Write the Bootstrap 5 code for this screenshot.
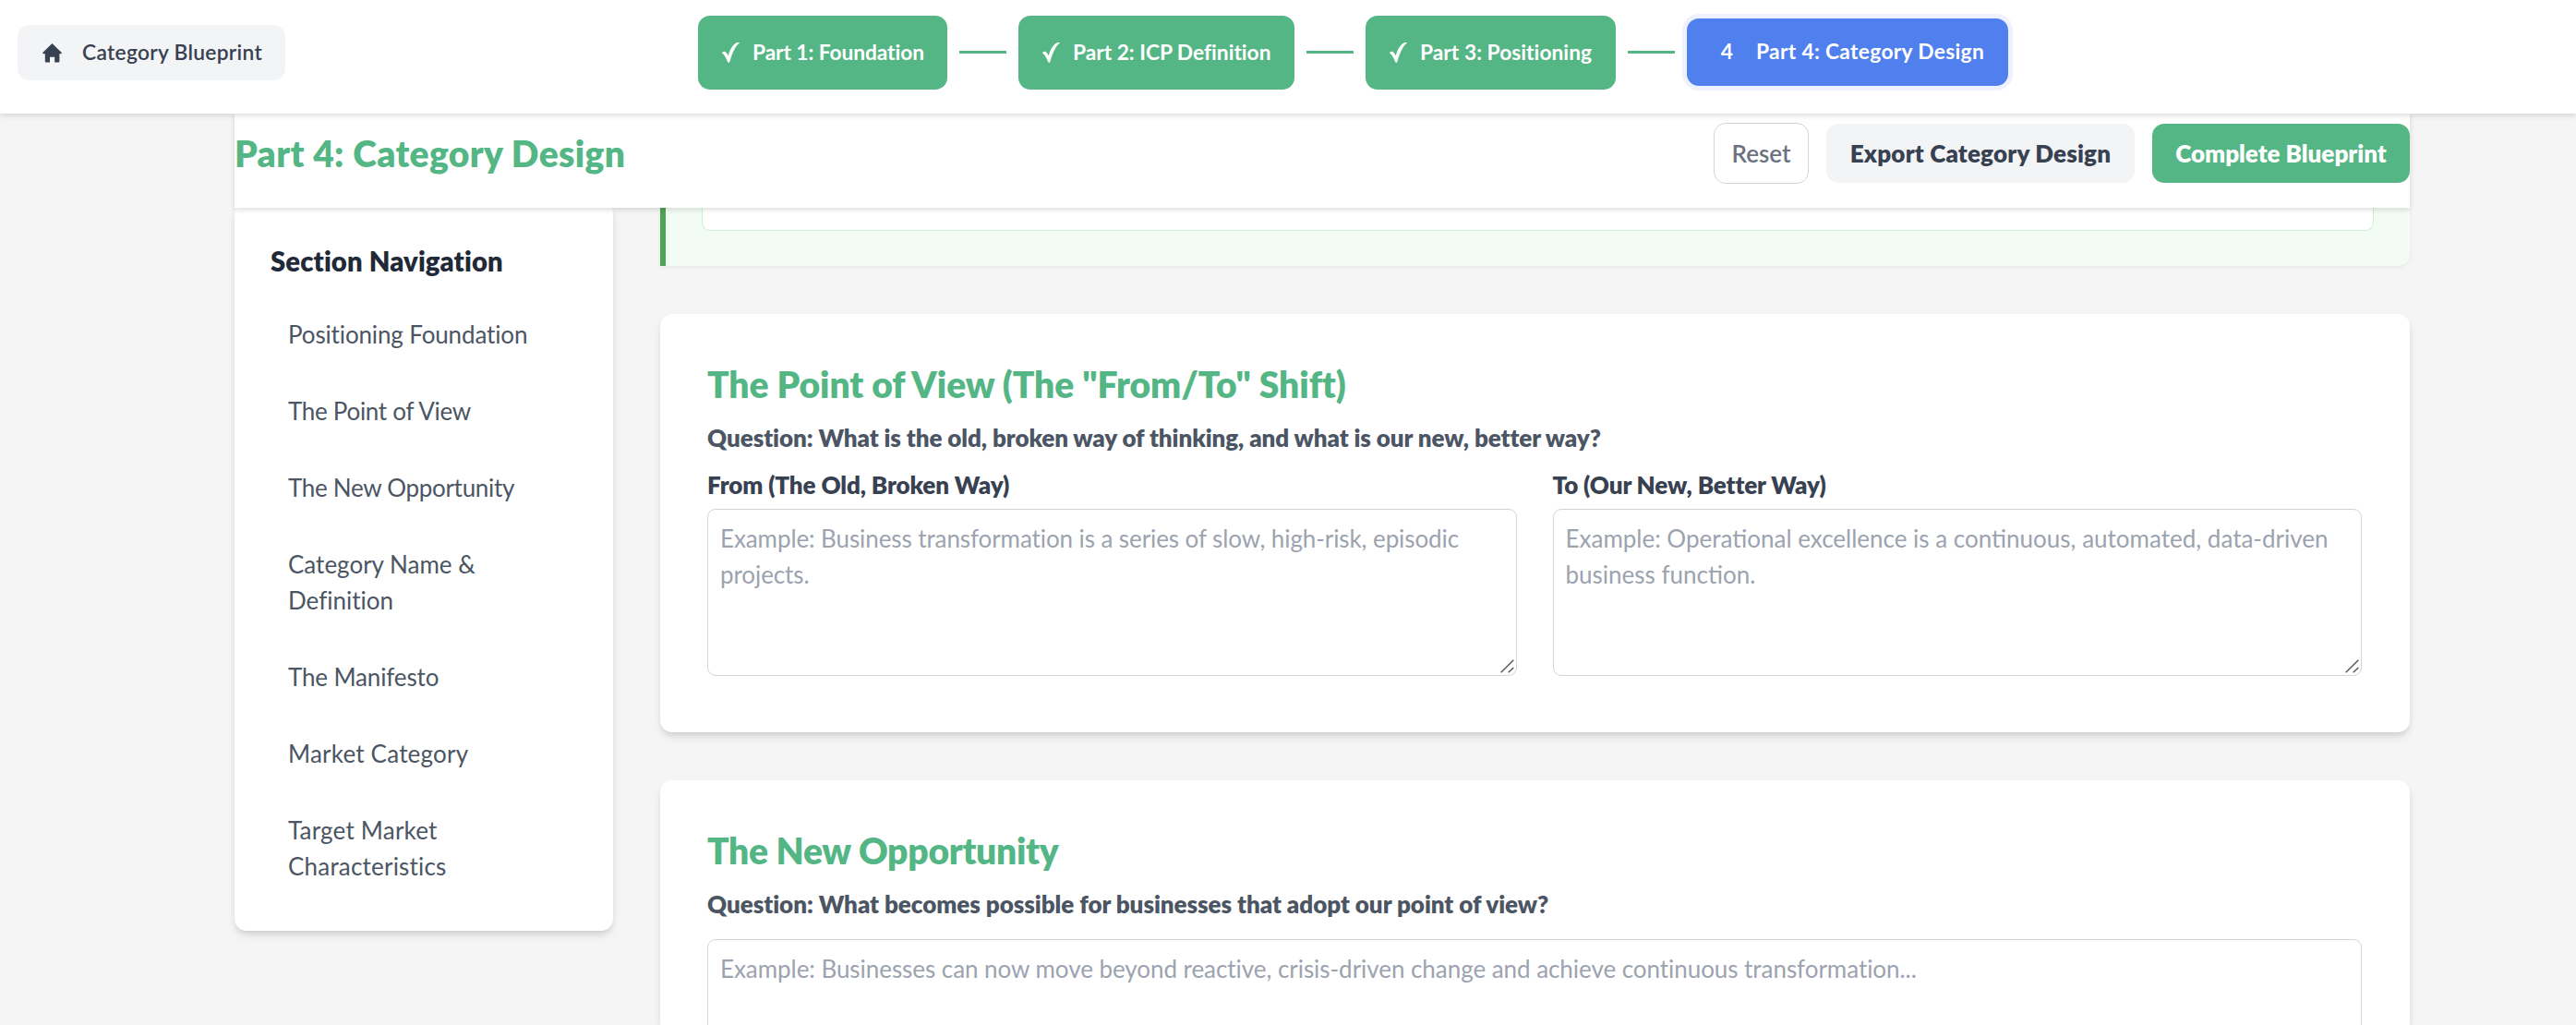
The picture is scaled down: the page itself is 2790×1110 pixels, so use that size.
<!DOCTYPE html>
<html lang="en">
<head>
<meta charset="utf-8">
<meta name="viewport" content="width=device-width, initial-scale=1">
<title>Category Blueprint</title>
<link href="https://cdn.jsdelivr.net/npm/bootstrap@5.3.0/dist/css/bootstrap.min.css" rel="stylesheet">
<style>
  html { font-size: 26px; overflow: hidden; }
  body { font-family: Lato, "Open Sans", sans-serif; font-variant-ligatures: none; background: #f5f5f5; color: #374151; height: 1110px; overflow: hidden; }

  /* Top bar with the progress steps */
  .topbar { height: 123px; padding: 17px 19px 26px; box-shadow: 0 2px 6px rgba(0,0,0,.14); z-index: 30; }
  .home-btn { width: 290px; height: 60px; padding: 0 0 0 26px; gap: 22px; background: #f3f4f6; color: #374151; border-radius: 13px; font-size: 22.75px; font-weight: 600; letter-spacing: .3px; }
  .steps { margin-left: 447px; }
  .step { height: 80px; padding: 0 0 0 26px; gap: 14px; border-radius: 13px; background: #55b685; color: #fff; font-size: 22.75px; font-weight: 700; white-space: nowrap; }
  .step svg { flex: none; }
  .step-1 { width: 270px; letter-spacing: -.08px; }
  .step-2 { width: 299px; letter-spacing: -.02px; }
  .step-3 { width: 271px; letter-spacing: .03px; }
  .step-4 { width: 348px; height: 73px; margin-top: -1px; background: #4f80ee; box-shadow: 0 0 0 5px #edf2fe; letter-spacing: .33px; }
  .step-num { width: 35px; text-align: center; }
  .step-line { width: 51px; height: 3px; margin: -1px 13px 0; background: #55b685; }

  /* Page frame */
  .page { width: 2356px; margin-left: 254px; }
  .titlebar { height: 102px; padding: 10px 0 26px; box-shadow: 0 2px 6px rgba(0,0,0,.14); z-index: 20; }
  .titlebar h1 { font-size: 39px; font-weight: 800; color: #55b685; letter-spacing: .37px; }
  .tool { height: 64px; padding: 0; border: 0; border-radius: 13px; font-weight: 800; }
  .tool-reset { width: 103px; height: 66px; border: 1px solid #d1d5db; background: #fff; color: #6b7280; font-weight: 600; }
  .tool-export { width: 334px; margin: 0 19px; background: #f3f4f6; color: #374151; letter-spacing: .2px; }
  .tool-done { width: 279px; background: #55b685; color: #fff; letter-spacing: 0; }

  .panel { background: #fff; border-radius: 13px; box-shadow: 0 6px 10px -1px rgba(0,0,0,.1), 0 3px 6px -2px rgba(0,0,0,.1); }

  /* Section navigation */
  .side { width: 410px; height: 789px; margin-top: -6px; padding: 46px 39px 39px; flex: none; }
  .side h2 { font-size: 29.25px; font-weight: 800; color: #1f2937; letter-spacing: .12px; margin-bottom: 30px; }
  .side-list { gap: 18px; }
  .side-list a { padding: 13px 60px 13px 19px; color: #4b5563; text-decoration: none; }
  .ls-tight { letter-spacing: -.3px; }
  .ls-snug { letter-spacing: -.14px; }
  .ls-wide { letter-spacing: .2px; }

  /* Content column */
  .content { margin-left: 51px; gap: 52px; }
  .foundation { height: 63px; padding: 0 39px 38px; background: #f2fcf5; border-left: 6px solid #4fa357; border-radius: 0 0 13px 0; box-shadow: 0 2px 5px rgba(0,0,0,.05); }
  .foundation-box { background: #fff; border: 1px solid #c9f2d5; border-top: 0; border-radius: 0 0 9px 9px; }
  .block { padding: 53px 52px 0 51px; }
  .block-pov { height: 453px; }
  .block-opp { height: 265px; border-radius: 13px 13px 0 0; }
  .block h2 { font-size: 39px; font-weight: 800; color: #55b685; line-height: 47px; margin-bottom: 15px; }
  .block-pov h2 { letter-spacing: -.05px; }
  .block-opp h2 { letter-spacing: -.28px; }
  .ask { font-weight: 800; color: #4b5563; margin-bottom: 12px; letter-spacing: -.08px; }
  .block-opp .ask { margin-bottom: 18px; letter-spacing: -.05px; }
  .pair { gap: 39px; }
  .pair label { font-weight: 800; color: #374151; margin-bottom: 6px; letter-spacing: -.1px; }
  .entry { height: 181px; padding: 12px 13px; border: 1px solid #d1d5db; border-radius: 9px; resize: none; font-size: 26px; overflow: hidden; background: #fff; }
  .entry.ls-snug { letter-spacing: -.09px; }
  .block-opp .entry { height: 93px; border-bottom: 0; border-radius: 9px 9px 0 0; letter-spacing: -.05px; }
  .entry::placeholder { color: #9ca3af; opacity: 1; }
  .grip { right: 3px; bottom: 3px; }
</style>
<script src="https://cdn.jsdelivr.net/npm/bootstrap@5.3.0/dist/js/bootstrap.bundle.min.js"></script>
</head>
<body>
<svg class="d-none">
  <symbol id="tick" viewBox="0 0 19 22"><path d="M0 11.2 C1.6 9.4 3.8 9.8 4.8 11.6 L6.8 14.8 C8.6 8.4 11.4 3 15.2 .8 C16.4 .2 17.8 0 19 .1 C14.4 3.6 10.8 11 8.3 20.4 L7.3 22 L6 20.2 C4.6 16.6 3.2 13.4 0 11.2Z" fill="currentColor" stroke="currentColor" stroke-width=".5"/></symbol>
  <symbol id="grip" viewBox="0 0 15 15"><path d="M.7 14.3 14.3 .7M8.7 14.3 14.3 8.9" stroke="#555" stroke-width="1.4" fill="none"/></symbol>
</svg>

<header class="topbar bg-white d-flex align-items-center position-relative">
  <a class="home-btn btn d-flex align-items-center" href="#">
    <svg width="21" height="21" viewBox="0 0 21 21"><path d="M10.5 0 21 10.2 20.3 11.2H18.4V19.6Q18.4 20.6 17.4 20.6H13.2V14.8H8V20.6H3.8Q2.8 20.6 2.8 19.6V11.2H.7L0 10.2Z" fill="#374151"/></svg>
    <span>Category Blueprint</span>
  </a>
  <nav class="steps d-flex align-items-center">
    <div class="step step-1 d-flex align-items-center"><svg width="19" height="22"><use href="#tick"/></svg><span>Part 1: Foundation</span></div>
    <div class="step-line"></div>
    <div class="step step-2 d-flex align-items-center"><svg width="19" height="22"><use href="#tick"/></svg><span>Part 2: ICP Definition</span></div>
    <div class="step-line"></div>
    <div class="step step-3 d-flex align-items-center"><svg width="19" height="22"><use href="#tick"/></svg><span>Part 3: Positioning</span></div>
    <div class="step-line"></div>
    <div class="step step-4 d-flex align-items-center"><span class="step-num">4</span><span>Part 4: Category Design</span></div>
  </nav>
</header>

<div class="page">
  <div class="titlebar bg-white d-flex align-items-center justify-content-between position-relative">
    <h1 class="mb-0">Part 4: Category Design</h1>
    <div class="d-flex align-items-center">
      <button class="tool tool-reset btn">Reset</button>
      <button class="tool tool-export btn">Export Category Design</button>
      <button class="tool tool-done btn">Complete Blueprint</button>
    </div>
  </div>

  <div class="d-flex align-items-start">
    <aside class="side panel">
      <h2>Section Navigation</h2>
      <nav class="side-list d-flex flex-column">
        <a class="ls-snug pe-0" href="#">Positioning Foundation</a>
        <a class="ls-tight" href="#">The Point of View</a>
        <a class="ls-tight pe-0" href="#">The New Opportunity</a>
        <a href="#">Category Name &amp; Definition</a>
        <a class="ls-snug" href="#">The Manifesto</a>
        <a class="ls-wide" href="#">Market Category</a>
        <a class="ls-wide" href="#">Target Market Characteristics</a>
      </nav>
    </aside>

    <main class="content d-flex flex-column flex-grow-1">
      <section class="foundation d-flex flex-column"><div class="foundation-box flex-grow-1"></div></section>

      <section class="block block-pov panel">
        <h2>The Point of View (The "From/To" Shift)</h2>
        <p class="ask">Question: What is the old, broken way of thinking, and what is our new, better way?</p>
        <div class="pair d-flex">
          <div class="flex-fill w-50">
            <label class="d-block">From (The Old, Broken Way)</label>
            <div class="position-relative">
              <textarea class="entry form-control ls-snug" placeholder="Example: Business transformation is a series of slow, high-risk, episodic projects."></textarea>
              <svg class="grip position-absolute" width="15" height="15"><use href="#grip"/></svg>
            </div>
          </div>
          <div class="flex-fill w-50">
            <label class="d-block">To (Our New, Better Way)</label>
            <div class="position-relative">
              <textarea class="entry form-control" placeholder="Example: Operational excellence is a continuous, automated, data-driven business function."></textarea>
              <svg class="grip position-absolute" width="15" height="15"><use href="#grip"/></svg>
            </div>
          </div>
        </div>
      </section>

      <section class="block block-opp panel">
        <h2>The New Opportunity</h2>
        <p class="ask">Question: What becomes possible for businesses that adopt our point of view?</p>
        <textarea class="entry form-control" placeholder="Example: Businesses can now move beyond reactive, crisis-driven change and achieve continuous transformation..."></textarea>
      </section>
    </main>
  </div>
</div>
</body>
</html>
